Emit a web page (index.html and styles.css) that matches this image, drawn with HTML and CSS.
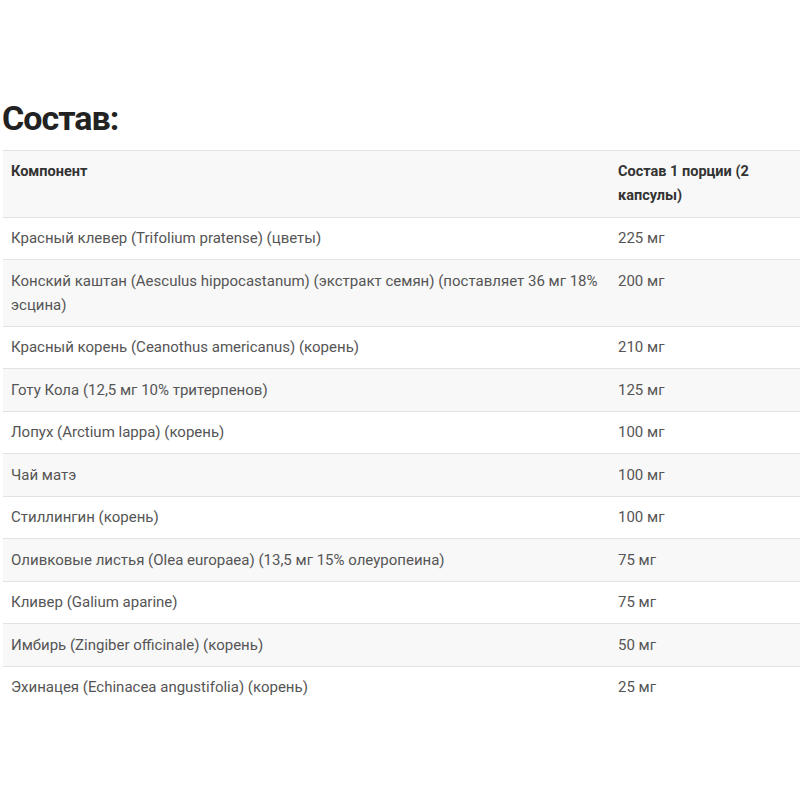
FILE: index.html
```html
<!DOCTYPE html>
<html lang="ru">
<head>
<meta charset="utf-8">
<title>Состав</title>
<link rel="stylesheet" href="styles.css">
</head>
<body>
<section class="composition">
  <h2 class="title">Состав:</h2>
  <table class="comp-table">
    <colgroup>
      <col class="col-name">
      <col class="col-amount">
    </colgroup>
    <thead>
      <tr>
        <th>Компонент</th>
        <th>Состав 1 порции (2 капсулы)</th>
      </tr>
    </thead>
    <tbody>
      <tr><td>Красный клевер (Trifolium pratense) (цветы)</td><td>225 мг</td></tr>
      <tr><td>Конский каштан (Aesculus hippocastanum) (экстракт семян) (поставляет 36 мг 18% эсцина)</td><td>200 мг</td></tr>
      <tr><td>Красный корень (Ceanothus americanus) (корень)</td><td>210 мг</td></tr>
      <tr><td>Готу Кола (12,5 мг 10% тритерпенов)</td><td>125 мг</td></tr>
      <tr><td>Лопух (Arctium lappa) (корень)</td><td>100 мг</td></tr>
      <tr><td>Чай матэ</td><td>100 мг</td></tr>
      <tr><td>Стиллингин (корень)</td><td>100 мг</td></tr>
      <tr><td>Оливковые листья (Olea europaea) (13,5 мг 15% олеуропеина)</td><td>75 мг</td></tr>
      <tr><td>Кливер (Galium aparine)</td><td>75 мг</td></tr>
      <tr><td>Имбирь (Zingiber officinale) (корень)</td><td>50 мг</td></tr>
      <tr><td>Эхинацея (Echinacea angustifolia) (корень)</td><td>25 мг</td></tr>
    </tbody>
  </table>
</section>
</body>
</html>
```
FILE: styles.css
```css
html, body {
  margin: 0;
  padding: 0;
  background: #ffffff;
}
body {
  font-family: Roboto, "Noto Sans", sans-serif;
  color: #555;
  overflow: hidden;
}
.composition {
  padding: 98px 0 0 3px;
}
.title {
  margin: 0 0 12px -1px;
  font-size: 34px;
  line-height: 40px;
  font-weight: 700;
  color: #222;
  letter-spacing: -1px;
}
.comp-table {
  width: 820px;
  table-layout: fixed;
  border-collapse: collapse;
  font-size: 15px;
  line-height: 24px;
}
.col-name {
  width: 607px;
}
.col-amount {
  width: 213px;
}
.comp-table th,
.comp-table td {
  text-align: left;
  vertical-align: top;
  padding: 8.75px 8px;
  border-top: 1px solid #e2e2e2;
}
.comp-table th {
  color: #333;
  font-weight: 700;
  font-size: 14.5px;
  background: #f8f8f8;
}
.comp-table tbody tr:nth-child(even) td {
  background: #f8f8f8;
}
```
